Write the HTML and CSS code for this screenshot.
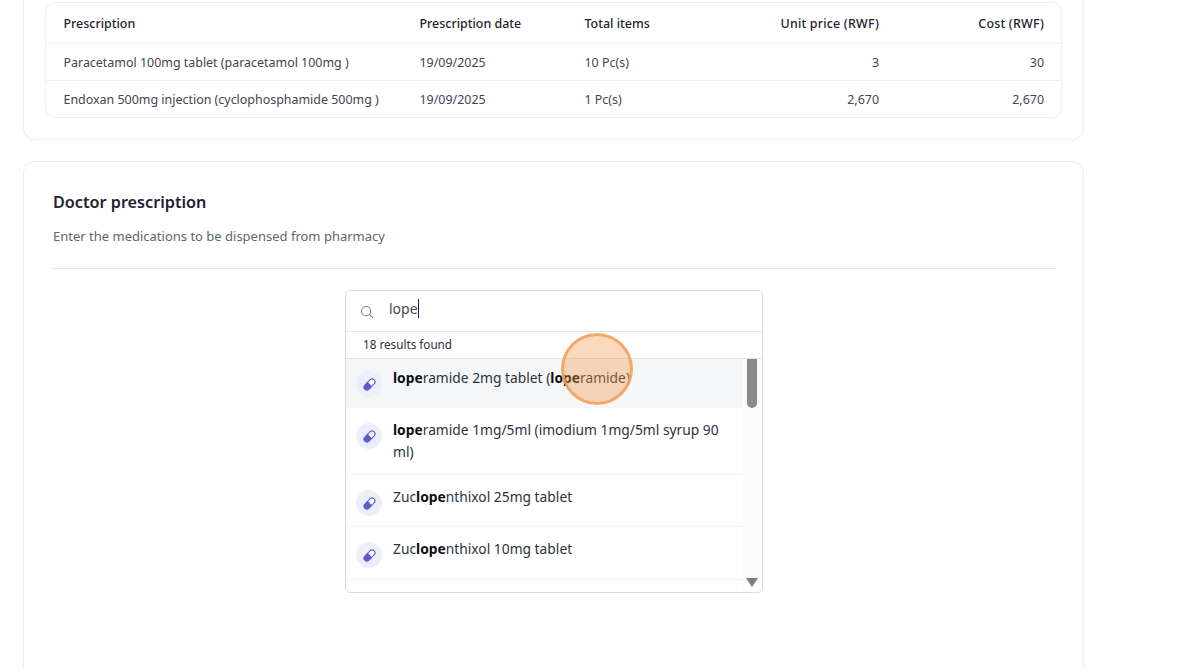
FILE: index.html
```html
<!DOCTYPE html>
<html lang="en">
<head>
<meta charset="utf-8">
<title>Doctor prescription</title>
<link rel="stylesheet" href="styles.css">
</head>
<body>
<main class="page">
  <section class="card card-top">
    <div class="table-wrap">
      <table class="rx-table">
        <colgroup>
          <col class="col-name"><col class="col-date"><col class="col-items"><col class="col-unit"><col class="col-cost">
        </colgroup>
        <thead>
          <tr><th>Prescription</th><th>Prescription date</th><th>Total items</th><th class="num">Unit price (RWF)</th><th class="num">Cost (RWF)</th></tr>
        </thead>
        <tbody>
          <tr><td>Paracetamol 100mg tablet (paracetamol 100mg )</td><td>19/09/2025</td><td>10 Pc(s)</td><td class="num">3</td><td class="num">30</td></tr>
          <tr><td>Endoxan 500mg injection (cyclophosphamide 500mg )</td><td>19/09/2025</td><td>1 Pc(s)</td><td class="num">2,670</td><td class="num">2,670</td></tr>
        </tbody>
      </table>
    </div>
  </section>

  <section class="card card-main">
    <h2 class="title">Doctor prescription</h2>
    <p class="subtitle">Enter the medications to be dispensed from pharmacy</p>
    <hr class="rule">
    <div class="picker">
      <div class="search">
        <svg class="search-icon" viewBox="0 0 16 16" width="14" height="14" fill="none" stroke="#7b8187" stroke-width="1.2" stroke-linecap="round"><circle cx="7" cy="7" r="5.2"/><path d="M11 11l3.2 3.2"/></svg>
        <span class="query">lope</span><span class="caret"></span>
      </div>
      <div class="count">18 results found</div>
      <div class="results">
        <ul class="list">
          <li class="item active">
            <span class="pill"><svg viewBox="0 0 14 14" width="15" height="15"><g transform="rotate(-45 7 7)"><path d="M7 3.8H3.6a3.2 3.2 0 0 0 0 6.4H7z" fill="#5a5bd0"/><path d="M7 4.3h3.4a2.7 2.7 0 0 1 0 5.4H7z" fill="#fff" stroke="#5a5bd0" stroke-width="1"/></g></svg></span>
            <span class="label"><b>lope</b>ramide 2mg tablet (<b>lope</b>ramide)</span>
          </li>
          <li class="item">
            <span class="pill"><svg viewBox="0 0 14 14" width="15" height="15"><g transform="rotate(-45 7 7)"><path d="M7 3.8H3.6a3.2 3.2 0 0 0 0 6.4H7z" fill="#5a5bd0"/><path d="M7 4.3h3.4a2.7 2.7 0 0 1 0 5.4H7z" fill="#fff" stroke="#5a5bd0" stroke-width="1"/></g></svg></span>
            <span class="label"><b>lope</b>ramide 1mg/5ml (imodium 1mg/5ml syrup 90 ml)</span>
          </li>
          <li class="item">
            <span class="pill"><svg viewBox="0 0 14 14" width="15" height="15"><g transform="rotate(-45 7 7)"><path d="M7 3.8H3.6a3.2 3.2 0 0 0 0 6.4H7z" fill="#5a5bd0"/><path d="M7 4.3h3.4a2.7 2.7 0 0 1 0 5.4H7z" fill="#fff" stroke="#5a5bd0" stroke-width="1"/></g></svg></span>
            <span class="label">Zuc<b>lope</b>nthixol 25mg tablet</span>
          </li>
          <li class="item">
            <span class="pill"><svg viewBox="0 0 14 14" width="15" height="15"><g transform="rotate(-45 7 7)"><path d="M7 3.8H3.6a3.2 3.2 0 0 0 0 6.4H7z" fill="#5a5bd0"/><path d="M7 4.3h3.4a2.7 2.7 0 0 1 0 5.4H7z" fill="#fff" stroke="#5a5bd0" stroke-width="1"/></g></svg></span>
            <span class="label">Zuc<b>lope</b>nthixol 10mg tablet</span>
          </li>
        </ul>
        <div class="scrollbar">
          <div class="thumb"></div>
          <div class="arrow"></div>
        </div>
      </div>
    </div>
  </section>
</main>
<div class="click-marker"></div>
</body>
</html>
```
FILE: styles.css
```css
* { box-sizing: border-box; }
html, body { margin: 0; height: 671px; overflow: hidden; background: #fff; }
body { font-family: "Noto Sans", sans-serif; color: #1f2933; }
.page { width: 1084px; height: 671px; overflow: hidden; padding-left: 23px; }

.card { background: #fff; border: 1px solid #eceef0; border-radius: 12px; }
.card-top { height: 140px; padding: 1px 21px 0; border-top: 0; border-radius: 0 0 12px 12px; margin-bottom: 21px; }
.table-wrap { margin-top: 1px; border: 1px solid #eff0f2; border-radius: 10px; overflow: hidden; }
.rx-table { width: 100%; table-layout: fixed; border-collapse: collapse; font-size: 12.45px; }
.col-name { width: 356px; }
.col-date { width: 165px; }
.col-items { width: 165px; }
.col-unit { width: 164px; }
.rx-table th { height: 40px; padding: 1px 0 0 17.5px; text-align: left; font-weight: 500; color: #1d2530; }
.rx-table td { height: 37px; padding: 2px 0 0 17.5px; color: #3d4651; border-top: 1px solid #eff0f2; }
.rx-table .num { text-align: right; padding-left: 0; padding-right: 17px; }
.rx-table th.num { letter-spacing: 0.2px; }

.card-main { height: 509px; border-bottom: 0; border-radius: 12px 12px 0 0; padding: 27px 27px 0 28px; }
.title { margin: 0 0 0 1px; font-size: 16.2px; line-height: 26px; font-weight: 600; color: #1b2430; }
.subtitle { margin: 11px 0 0 1px; font-size: 13px; line-height: 20px; color: #5d6670; }
.rule { margin: 22px 0 0; border: 0; border-top: 1px solid #e6e8eb; }

.picker { width: 418px; height: 303px; margin: 21px 0 0 293px; border: 1px solid #d9dcdf; border-radius: 5px; overflow: hidden; display: flex; flex-direction: column; }
.search { height: 41px; flex: none; display: flex; align-items: center; padding-left: 14px; border-bottom: 1px solid #e2e4e7; }
.search-icon { margin-top: 2px; margin-right: 15px; }
.query { font-size: 14px; color: #414a54; margin-bottom: 6px; }
.caret { width: 1.5px; height: 19px; background: #1b2430; margin-bottom: 6px; }
.count { height: 27px; flex: none; padding-left: 17px; font-size: 11.7px; line-height: 24px; color: #2a323b; border-bottom: 1px solid #e2e4e7; }

.results { flex: 1; min-height: 0; display: flex; }
.list { flex: 1; margin: 0; padding: 0; list-style: none; }
.item { display: flex; align-items: flex-start; gap: 11px; height: 52.4px; padding: 11px 16px 0 10px; border-bottom: 1px solid #f1f2f4; }
.item:nth-child(2) { height: 67px; }
.item.active { height: 49px; padding-top: 8px; background: #f5f6f8; border-bottom: 0; }
.pill { flex: none; width: 26px; height: 26px; margin-top: 4px; border-radius: 50%; background: #eeeefb; display: flex; align-items: center; justify-content: center; }
.label { font-size: 13.8px; line-height: 22px; color: #2b333c; }
.label b { font-weight: 700; color: #0b0f14; }

.scrollbar { width: 19px; flex: none; position: relative; padding-left: 4px; background: #fcfcfd; }
.thumb { width: 10px; height: 49px; background: #8a8a8a; border-radius: 0 0 5px 5px; }
.arrow { position: absolute; left: 3px; top: 219px; width: 0; height: 0; border-left: 6.5px solid transparent; border-right: 6.5px solid transparent; border-top: 9px solid #7f7f7f; }

.click-marker { position: absolute; left: 561px; top: 333px; width: 72px; height: 72px; border-radius: 50%; background: rgba(245, 150, 70, 0.36); border: 3px solid rgba(243, 160, 90, 0.85); }
```
